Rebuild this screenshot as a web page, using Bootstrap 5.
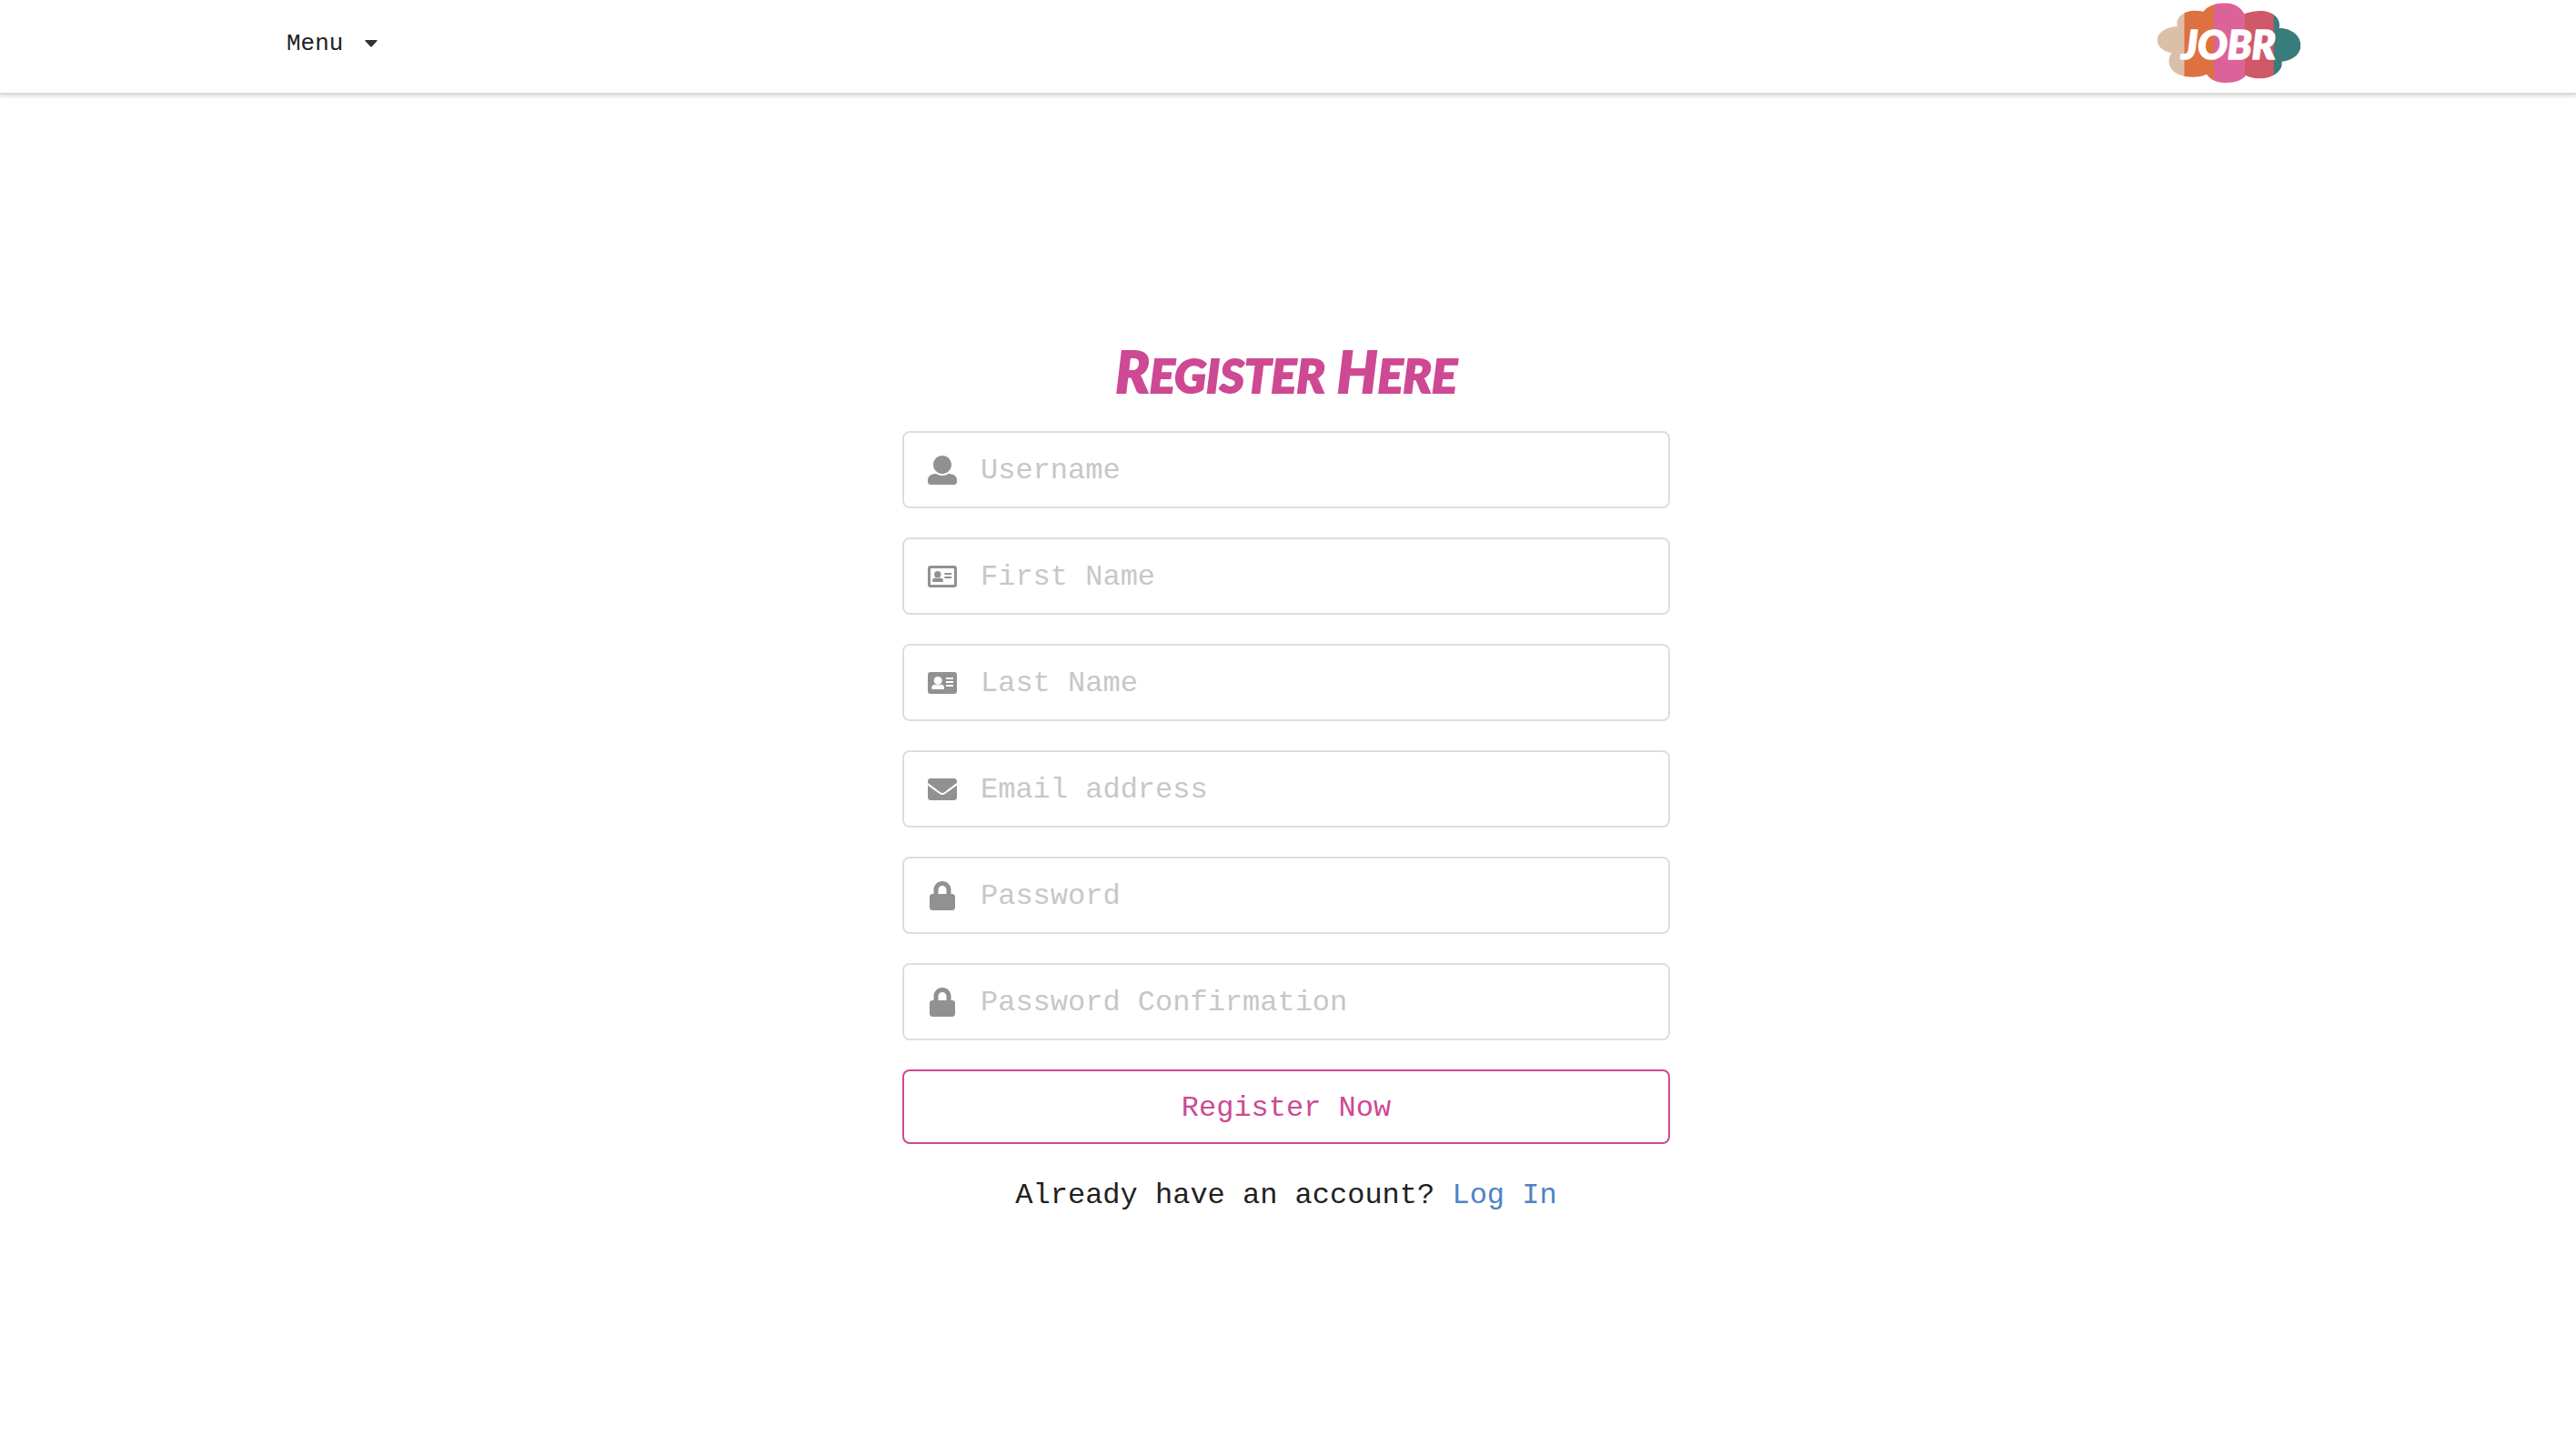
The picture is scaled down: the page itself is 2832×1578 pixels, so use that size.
<!DOCTYPE html>
<html lang="en">
<head>
<meta charset="utf-8">
<meta name="viewport" content="width=device-width, initial-scale=1">
<title>JOBR - Register</title>
<link href="https://cdn.jsdelivr.net/npm/bootstrap@5.3.0/dist/css/bootstrap.min.css" rel="stylesheet">
<style>
  body { font-family: "Liberation Mono", monospace; font-size: 32px; line-height: 40px; color: #212121; background: #fff; }
  .site-nav { border-bottom: 2px solid #dadada; box-shadow: 0 2px 4px rgba(34, 36, 38, .15); }
  .nav-inner { max-width: 2254px; min-height: 102px; }
  .menu-btn { font-size: 26px; line-height: 40px; color: #212121; padding: 28px 26px 0; gap: 24px; }
  .menu-btn svg { width: 14px; height: 8px; }
  .logo-link { padding-right: 13px; line-height: 0; }
  .logo-link svg { width: 160px; height: 94px; }
  .logo-word { font: italic 900 130px Lato, sans-serif; stroke: #fff; stroke-width: 5px; stroke-linejoin: round; }
  .register-main { padding-top: 266px; padding-bottom: 32px; }
  .register-box { max-width: 844px; }
  .register-title { font: italic 900 62px/76px Lato, sans-serif; color: #ce4993; text-transform: uppercase; margin-bottom: 28px; -webkit-text-stroke: 2px #ce4993; }
  .small-letters { font-size: 52px; line-height: 60px; }
  .register-form { gap: 32px; }
  .field-box { height: 85px; border: 2px solid #dedede; border-radius: 8px; }
  .field-icon { width: 58px; padding: 0 0 0 26px; background: none; border: 0; color: #919191; }
  .field-icon svg { width: 32px; height: 32px; fill: currentColor; }
  .field-box .form-control { border: 0; padding: 2px 27px 0; font-size: 32px; line-height: 40px; color: #212121; background: none; }
  .field-box .form-control::placeholder { color: #c7c7c7; opacity: 1; }
  .register-btn { height: 82px; padding: 9px 12px 5px; font-size: 32px; line-height: 40px; border-radius: 8px; --bs-btn-border-width: 2px; --bs-btn-color: #ce4993; --bs-btn-border-color: #ce4993; --bs-btn-hover-color: #fff; --bs-btn-hover-bg: #ce4993; }
  .login-line { margin: 37px 0 0; }
  .login-line a { color: #4f83c4; }
</style>
</head>
<body>
<nav class="site-nav">
  <div class="nav-inner container-fluid p-0 d-flex justify-content-between align-items-start">
    <button type="button" class="menu-btn btn border-0 d-flex align-items-center">Menu
      <svg viewBox="0 0 14 8" aria-hidden="true"><path d="M1 0h12q1 0 .6 1L8 7Q7 8 6 7L.4 1Q0 0 1 0z" fill="#333"/></svg>
    </button>
    <a href="#" class="logo-link" aria-label="JOBR home">
      <svg viewBox="60 0 480 282">
        <clipPath id="cloud"><path d="M132 88C95 88 65 108 65 132C65 155 87 172 112 174C92 205 105 254 182 254C200 254 215 251 228 245C238 262 262 273 293 273C322 273 345 265 357 249C370 256 388 259 403 259C445 259 480 235 476 203C512 200 538 178 538 150C538 115 505 93 467 93C475 60 445 36 405 36C385 36 365 40 352 46C340 22 315 10 288 10C258 10 232 20 217 38C208 36 200 35 191 35C152 35 122 58 132 88Z"/></clipPath>
        <g clip-path="url(#cloud)">
          <rect x="60" width="95" height="282" fill="#dcbfa7"/>
          <rect x="154" width="99" height="282" fill="#dd7140"/>
          <rect x="252" width="101" height="282" fill="#dc6399"/>
          <rect x="352" width="98" height="282" fill="#d05868"/>
          <rect x="449" width="91" height="282" fill="#397c7c"/>
        </g>
        <text x="300" y="195" text-anchor="middle" class="logo-word" fill="#fff">JOBR</text>
      </svg>
    </a>
  </div>
</nav>

<main class="register-main ps-0 pe-1">
  <div class="register-box mx-auto text-center">
    <h1 class="register-title">R<span class="small-letters">egister</span> H<span class="small-letters">ere</span></h1>
    <form class="register-form d-flex flex-column" onsubmit="return false">
      <div class="field-box input-group flex-nowrap">
        <label class="field-icon input-group-text" for="username" aria-label="Username"><svg viewBox="0 0 512 512"><path d="M256 0c88.366 0 160 71.634 160 160s-71.634 160-160 160S96 248.366 96 160 167.634 0 256 0zm183.283 333.821l-71.313-17.828c-74.923 53.89-165.738 41.864-223.94 0l-71.313 17.828C29.981 344.505 0 382.903 0 426.955V464c0 26.51 21.49 48 48 48h416c26.51 0 48-21.49 48-48v-37.045c0-44.052-29.981-82.45-72.717-93.134z"/></svg></label>
        <input class="form-control" id="username" type="text" placeholder="Username">
      </div>
      <div class="field-box input-group flex-nowrap">
        <label class="field-icon input-group-text" for="first-name" aria-label="First Name"><svg viewBox="0 -4 32 32"><path fill-rule="evenodd" d="M3 0h26q3 0 3 3v18q0 3-3 3H3q-3 0-3-3V3q0-3 3-3zM3 3v18h26V3z"/><circle cx="10.8" cy="9.7" r="3.7"/><path d="M5 17v-.2q0-3.200 3.600-3.200q2.200 1 4.400 0q4 0 4 3.200V17q0 1-1 1H6q-1 0-1-1zM18.300 8H26v2h-7.700zM18.300 12H26v2h-7.700z"/></svg></label>
        <input class="form-control" id="first-name" type="text" placeholder="First Name">
      </div>
      <div class="field-box input-group flex-nowrap">
        <label class="field-icon input-group-text" for="last-name" aria-label="Last Name"><svg viewBox="0 -4 32 32"><rect width="32" height="24" rx="3"/><g fill="#fff"><circle cx="11.200" cy="9.400" r="4.500"/><path d="M4.300 18v-.8q0-3.500 3.900-3.500q3 1.300 6 0q3.900 0 3.900 3.500V18q0 1-1 1H5.300q-1 0-1-1zM20 6h8v2h-8zM20 10h8v2h-8zM20 14h8v2h-8z"/></g></svg></label>
        <input class="form-control" id="last-name" type="text" placeholder="Last Name">
      </div>
      <div class="field-box input-group flex-nowrap">
        <label class="field-icon input-group-text" for="email" aria-label="Email address"><svg viewBox="0 0 512 512"><path d="M502.300 190.800c3.900-3.100 9.700-.2 9.700 4.700V400c0 26.500-21.500 48-48 48H48c-26.500 0-48-21.500-48-48V195.600c0-5 5.700-7.800 9.700-4.700 22.400 17.400 52.100 39.500 154.100 113.600 21.100 15.400 56.700 47.800 92.200 47.600 35.700.3 72-32.800 92.300-47.600 102-74.100 131.600-96.300 154-113.700zM256 320c23.200.4 56.600-29.200 73.400-41.400 132.700-96.300 142.800-104.700 173.400-128.700 5.800-4.500 9.200-11.500 9.200-18.900v-19c0-26.500-21.500-48-48-48H48c-26.500 0-48 21.500-48 48v19c0 7.400 3.400 14.300 9.200 18.900 30.600 23.900 40.700 32.400 173.400 128.700 16.800 12.200 50.200 41.800 73.400 41.400z"/></svg></label>
        <input class="form-control" id="email" type="email" placeholder="Email address">
      </div>
      <div class="field-box input-group flex-nowrap">
        <label class="field-icon input-group-text" for="password" aria-label="Password"><svg viewBox="0 0 448 512"><path d="M400 224h-24v-72C376 68.200 307.800 0 224 0S72 68.200 72 152v72H48c-26.500 0-48 21.500-48 48v192c0 26.500 21.500 48 48 48h352c26.500 0 48-21.500 48-48V272c0-26.500-21.500-48-48-48zm-104 0H152v-72c0-39.700 32.300-72 72-72s72 32.300 72 72v72z"/></svg></label>
        <input class="form-control" id="password" type="password" placeholder="Password">
      </div>
      <div class="field-box input-group flex-nowrap">
        <label class="field-icon input-group-text" for="password-confirm" aria-label="Password Confirmation"><svg viewBox="0 0 448 512"><path d="M400 224h-24v-72C376 68.200 307.800 0 224 0S72 68.200 72 152v72H48c-26.500 0-48 21.500-48 48v192c0 26.500 21.500 48 48 48h352c26.500 0 48-21.500 48-48V272c0-26.500-21.500-48-48-48zm-104 0H152v-72c0-39.700 32.300-72 72-72s72 32.300 72 72v72z"/></svg></label>
        <input class="form-control" id="password-confirm" type="password" placeholder="Password Confirmation">
      </div>
      <button type="submit" class="register-btn btn w-100">Register Now</button>
    </form>
    <p class="login-line">Already have an account? <a href="#" class="text-decoration-none">Log In</a></p>
  </div>
</main>
<script src="https://cdn.jsdelivr.net/npm/bootstrap@5.3.0/dist/js/bootstrap.bundle.min.js"></script>
</body>
</html>
